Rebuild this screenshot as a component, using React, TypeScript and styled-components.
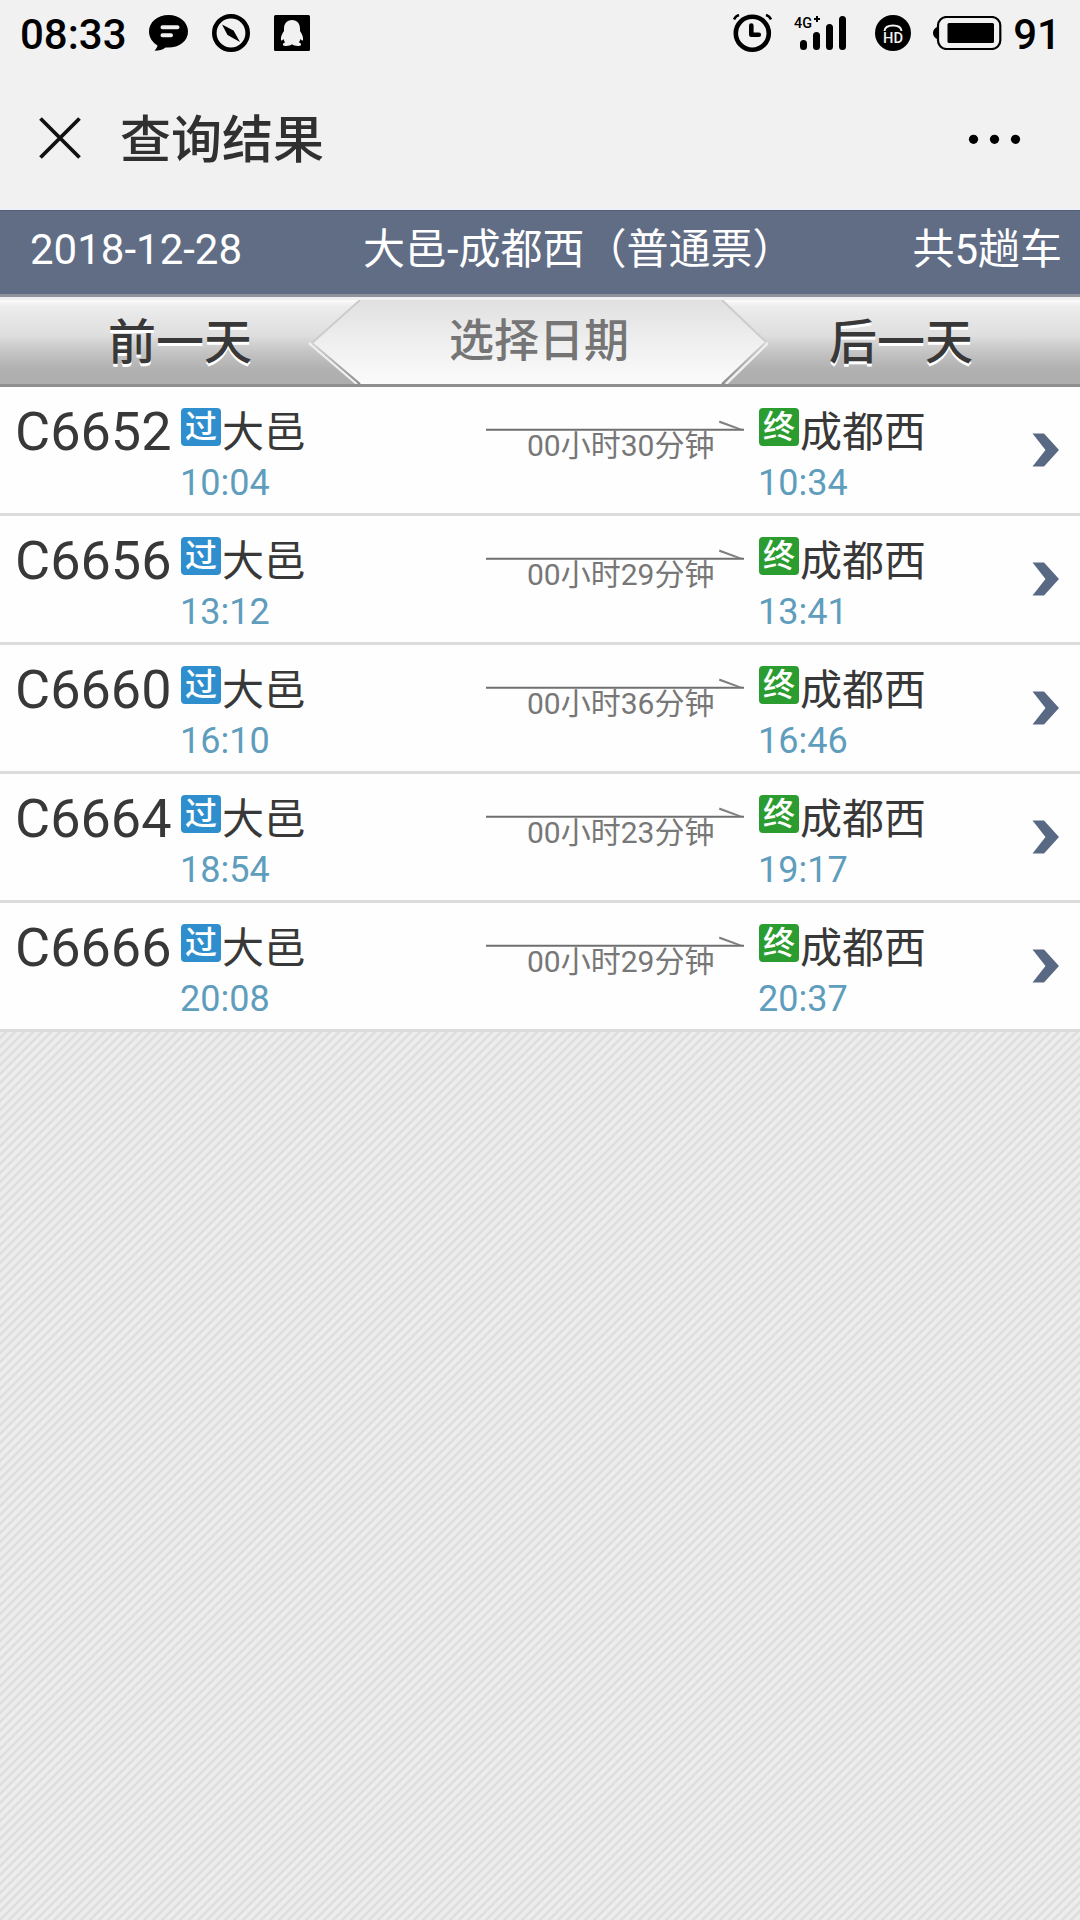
import React from 'react';
import styled, { createGlobalStyle } from 'styled-components';

const GlobalStyle = createGlobalStyle`
  * { box-sizing: border-box; }
  html, body { margin: 0; padding: 0; }
  body {
    font-family: Roboto, "Noto Sans CJK SC", sans-serif;
    color: #383838;
    background: #e8e8e8;
  }
  svg { display: block; flex: none; }
`;

const Screen = styled.div`
  width: 1080px;
  height: 1920px;
  display: flex;
  flex-direction: column;
  overflow: hidden;
`;

const StatusBar = styled.header`
  height: 70px;
  flex: none;
  display: flex;
  align-items: center;
  justify-content: space-between;
  padding: 0 19px 4px 20px;
  background: #f1f1f1;
  color: #000;
`;

const StatusGroup = styled.div<{ $gap: number }>`
  display: flex;
  align-items: center;
  gap: ${(p) => p.$gap}px;
`;

const StatusText = styled.span`
  font-size: 42px;
  line-height: 66px;
  font-weight: 500;
  padding-top: 4px;
`;

const Clock = styled(StatusText)`
  margin-right: -2px;
`;

const TitleBar = styled.div`
  height: 140px;
  flex: none;
  display: flex;
  align-items: center;
  padding: 0 58px 0 38px;
  background: #f1f1f1;
  border-bottom: 2px solid #f0f0f8;
`;

const Title = styled.h1`
  flex: 1;
  margin: 0 0 0 38px;
  padding-top: 4px;
  font-size: 51px;
  line-height: 60px;
  font-weight: 500;
  color: #303030;
`;

const Summary = styled.div`
  height: 87px;
  flex: none;
  display: flex;
  justify-content: space-between;
  padding: 10px 18px 0 30px;
  background: #606d85;
  border-top: 1px solid #566079;
  border-bottom: 3px solid #8f949c;
  color: #fff;
  font-size: 42px;
  line-height: 57px;
`;

const Route = styled.span`
  margin-left: 3px;
`;

const DayNav = styled.nav`
  height: 90px;
  flex: none;
  display: grid;
  grid-template-columns: 360px 362px 358px;
  border-top: 3px solid #f0f0f0;
  border-bottom: 3px solid #8f8f8f;
  background: linear-gradient(#fbfbfb 0, #ececec 8%, #dedede 42%, #c4c4c4 62%, #b1b1b1 82%, #adadad 100%);
`;

const DayButton = styled.button`
  border: 0;
  padding: 2px 0 0;
  background: none;
  font: 500 48px/82px Roboto, "Noto Sans CJK SC", sans-serif;
  color: #383838;
  text-shadow: 0 3px 0 #fff;
`;

const PickButton = styled.button`
  position: relative;
  border: 0;
  padding: 0;
  background: none;
  font: 500 45px/84px Roboto, "Noto Sans CJK SC", sans-serif;
  color: #757575;
`;

const PickShape = styled.svg`
  position: absolute;
  left: -52px;
  top: 0;
`;

const PickLabel = styled.span`
  position: relative;
  left: -2px;
`;

const List = styled.ul`
  flex: none;
  margin: 0;
  padding: 0;
  list-style: none;
`;

const Row = styled.li`
  height: 129px;
  display: grid;
  grid-template-columns: 166px 305px 273px 273px 1fr;
  padding-left: 15px;
  background: #fefefe;
  border-bottom: 3px solid #dcdcdc;
`;

const TrainCode = styled.span`
  padding-top: 15px;
  font-size: 54px;
  line-height: 60px;
`;

const Stop = styled.div`
  padding-top: 15px;
`;

const Station = styled.div`
  display: flex;
  align-items: flex-start;
  gap: 1px;
  height: 61px;
  font-size: 42px;
  line-height: 61px;
`;

const Badge = styled.span<{ $color: string }>`
  width: 40px;
  height: 38px;
  margin-top: 6px;
  border-radius: 4px;
  background: ${(p) => p.$color};
  color: #fff;
  font-size: 32px;
  line-height: 38px;
  font-weight: 500;
  text-align: center;
`;

const Time = styled.div`
  margin-left: -1px;
  font-size: 36px;
  line-height: 41px;
  color: #5f9dbd;
`;

const Trip = styled.div`
  padding-top: 33px;
`;

const Duration = styled.div`
  padding-left: 41px;
  font-size: 30px;
  line-height: 30px;
  color: #777;
`;

const Go = styled.div`
  padding-top: 46px;
`;

const Backdrop = styled.main`
  flex: 1;
  background: repeating-linear-gradient(135deg, #ededed 0, #ededed 2.2px, #dcdcdc 4px, #dcdcdc 4.6px, #ededed 6.364px);
`;

const trains = [
  { code: 'C6652', depart: '10:04', arrive: '10:34', duration: '00小时30分钟' },
  { code: 'C6656', depart: '13:12', arrive: '13:41', duration: '00小时29分钟' },
  { code: 'C6660', depart: '16:10', arrive: '16:46', duration: '00小时36分钟' },
  { code: 'C6664', depart: '18:54', arrive: '19:17', duration: '00小时23分钟' },
  { code: 'C6666', depart: '20:08', arrive: '20:37', duration: '00小时29分钟' },
];

const ChatIcon = () => (
  <svg width="39" height="38" viewBox="0 0 39 38">
    <path d="M19.5 1C8.700 1 0 8 0 17.500c0 6 3.600 11 8.500 14-.5 2-1.500 3.500-3 5.300 4.500 0 8.500-1 11-3.300 13 1 22.500-6 22.500-16C39 8 30.300 1 19.500 1z" />
    <path d="M13.500 13.200h15M13.500 21.200h8.500" stroke="#f1f1f1" strokeWidth="4" strokeLinecap="round" />
  </svg>
);

const CompassIcon = () => (
  <svg width="38" height="38" viewBox="0 0 38 38">
    <circle cx="19" cy="19" r="16.700" fill="none" stroke="#000" strokeWidth="4.600" />
    <path d="M10 10.500L21.500 16.500 28 28 15.500 21z" />
  </svg>
);

const PenguinIcon = () => (
  <svg width="36" height="36" viewBox="0 0 36 36">
    <rect width="36" height="36" rx="1.500" />
    <path
      fill="#f1f1f1"
      d="M18 5c-5.200 0-8 3.700-8 8.500v2.500C8 19 6.500 22 7 25c.4 1.200 1.600.2 2.500-1 .4 1.500 1 2.500 1.800 3.300-1.800.7-2.700 1.600-2.300 2.600.8 1.600 7 1.300 9-.700 2 2 8.200 2.300 9 .7.400-1-.5-1.900-2.300-2.600.8-.8 1.400-1.800 1.800-3.300.9 1.200 2.100 2.200 2.500 1 .5-3-1-6-3-9v-2.500C26 8.700 23.200 5 18 5z"
    />
  </svg>
);

const AlarmIcon = () => (
  <svg width="39" height="38" viewBox="0 0 39 38" fill="none" stroke="#000">
    <circle cx="19.300" cy="19.200" r="16.500" strokeWidth="4.600" />
    <path d="M18.300 11.500v9.300h7.500" strokeWidth="4.600" strokeLinecap="round" strokeLinejoin="round" />
    <path d="M1 5.500Q2.500 2 6 1M38 5.500Q36.500 2 33 1" strokeWidth="2.600" />
  </svg>
);

const SignalIcon = () => (
  <svg width="53" height="36" viewBox="0 0 53 36">
    <text x="0" y="12.500" fontFamily="Roboto, sans-serif" fontSize="15.500" fontWeight="500" textLength="18" lengthAdjust="spacingAndGlyphs">4G</text>
    <path d="M20 4h6M23 1v6" stroke="#000" strokeWidth="2" />
    <g stroke="#000" strokeWidth="7" strokeLinecap="round">
      <path d="M9.500 28.500v3M22.500 20.500v11M35.500 12.500v19M48.500 4.500v27" />
    </g>
  </svg>
);

const HdBadge = styled.svg`
  margin-left: 6px;
`;

const HdIcon = () => (
  <HdBadge width="36" height="36" viewBox="0 0 36 36">
    <circle cx="18" cy="18" r="18" />
    <path d="M9.500 16Q10 10.500 18 10.500T26.500 16" fill="none" stroke="#f1f1f1" strokeWidth="2" />
    <text x="18" y="28.200" fill="#f1f1f1" textAnchor="middle" fontFamily="Roboto, sans-serif" fontSize="15.500" fontWeight="500" textLength="20" lengthAdjust="spacingAndGlyphs">HD</text>
  </HdBadge>
);

const BatteryIcon = () => (
  <svg width="69" height="34" viewBox="0 0 69 34">
    <path d="M5 10.500C1.500 12 0 14 0 17s1.500 5 5 6.500z" />
    <rect x="5" y="1" width="62.300" height="32" rx="8.500" fill="none" stroke="#000" strokeWidth="2.200" />
    <rect x="14.500" y="7" width="46.500" height="20" rx="1.500" />
  </svg>
);

const App = () => (
  <>
    <GlobalStyle />
    <Screen>
      <StatusBar>
        <StatusGroup $gap={24}>
          <Clock>08:33</Clock>
          <ChatIcon />
          <CompassIcon />
          <PenguinIcon />
        </StatusGroup>
        <StatusGroup $gap={22}>
          <AlarmIcon />
          <SignalIcon />
          <HdIcon />
          <StatusGroup $gap={11}>
            <BatteryIcon />
            <StatusText>91</StatusText>
          </StatusGroup>
        </StatusGroup>
      </StatusBar>

      <TitleBar>
        <svg width="44" height="44" viewBox="0 0 44 44">
          <path d="M2.500 1.500l39 39M41.500 1.500l-39 39" stroke="#111" strokeWidth="3.800" />
        </svg>
        <Title>查询结果</Title>
        <svg width="54" height="10" viewBox="0 0 54 10">
          <circle cx="5.500" cy="5.300" r="4.600" />
          <circle cx="26.500" cy="5.300" r="4.600" />
          <circle cx="47.500" cy="5.300" r="4.600" />
        </svg>
      </TitleBar>

      <Summary>
        <span>2018-12-28</span>
        <Route>大邑-成都西（普通票）</Route>
        <span>共5趟车</span>
      </Summary>

      <DayNav>
        <DayButton>前一天</DayButton>
        <PickButton>
          <PickShape width="460" height="84" viewBox="0 0 460 84">
            <defs>
              <linearGradient id="pick" x1="0" y1="0" x2="0" y2="1">
                <stop offset="0" stopColor="#e0e0e0" />
                <stop offset="0.500" stopColor="#efefef" />
                <stop offset="1" stopColor="#fbfbfb" />
              </linearGradient>
              <linearGradient id="edge" x1="0" y1="0" x2="0" y2="1">
                <stop offset="0" stopColor="#d4d4d4" />
                <stop offset="1" stopColor="#8c8c8c" />
              </linearGradient>
            </defs>
            <path d="M52 0L4 43l48 41h362l44-42L414 0z" fill="url(#pick)" />
            <path d="M52 0L4 43M414 0l44 42" stroke="#cccccc" strokeWidth="2" />
            <path d="M1 43l48 41M460 43l-42 41" stroke="#efefef" strokeWidth="2.500" />
            <path d="M4 43l48 41M457 43l-43 41" stroke="url(#edge)" strokeWidth="2" />
          </PickShape>
          <PickLabel>选择日期</PickLabel>
        </PickButton>
        <DayButton>后一天</DayButton>
      </DayNav>

      <List>
        {trains.map((t) => (
          <Row key={t.code}>
            <TrainCode>{t.code}</TrainCode>
            <Stop>
              <Station>
                <Badge $color="#2f8fce">过</Badge>大邑
              </Station>
              <Time>{t.depart}</Time>
            </Stop>
            <Trip>
              <svg width="258" height="11" viewBox="0 0 258 11">
                <path d="M0 9.700h258" stroke="#6f6f6f" strokeWidth="2" />
                <path d="M233.500 0.500L256 9l-4 .5-19-6.700z" fill="#808080" />
              </svg>
              <Duration>{t.duration}</Duration>
            </Trip>
            <Stop>
              <Station>
                <Badge $color="#2b9c2f">终</Badge>成都西
              </Station>
              <Time>{t.arrive}</Time>
            </Stop>
            <Go>
              <svg width="28" height="34" viewBox="0 0 28 34">
                <path d="M0.500 0.500H12L27 17 12 33.500H0.500L13.500 17z" fill="#596983" />
              </svg>
            </Go>
          </Row>
        ))}
      </List>
      <Backdrop />
    </Screen>
  </>
);

export default App;
